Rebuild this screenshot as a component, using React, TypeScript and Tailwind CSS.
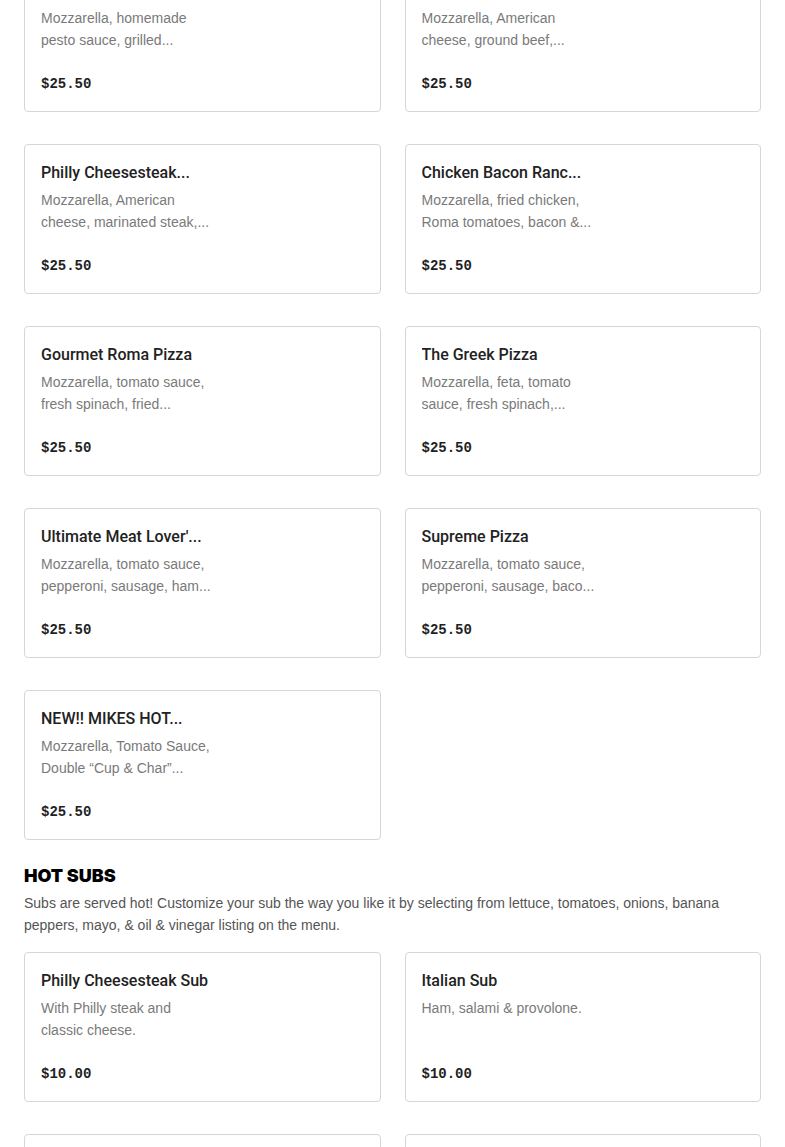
import React from "react";

type Item = { name: string; desc: string; price: string };

const pizzas: Item[] = [
  { name: "Chicken Pesto Pizza...", desc: "Mozzarella, homemade pesto sauce, grilled...", price: "$25.50" },
  { name: "Bacon Cheeseburger P...", desc: "Mozzarella, American cheese, ground beef,...", price: "$25.50" },
  { name: "Philly Cheesesteak...", desc: "Mozzarella, American cheese, marinated steak,...", price: "$25.50" },
  { name: "Chicken Bacon Ranc...", desc: "Mozzarella, fried chicken, Roma tomatoes, bacon &...", price: "$25.50" },
  { name: "Gourmet Roma Pizza", desc: "Mozzarella, tomato sauce, fresh spinach, fried...", price: "$25.50" },
  { name: "The Greek Pizza", desc: "Mozzarella, feta, tomato sauce, fresh spinach,...", price: "$25.50" },
  { name: "Ultimate Meat Lover'...", desc: "Mozzarella, tomato sauce, pepperoni, sausage, ham...", price: "$25.50" },
  { name: "Supreme Pizza", desc: "Mozzarella, tomato sauce, pepperoni, sausage, baco...", price: "$25.50" },
  { name: "NEW!! MIKES HOT...", desc: "Mozzarella, Tomato Sauce, Double \u201CCup & Char\u201D...", price: "$25.50" },
];

const subs: Item[] = [
  { name: "Philly Cheesesteak Sub", desc: "With Philly steak and classic cheese.", price: "$10.00" },
  { name: "Italian Sub", desc: "Ham, salami & provolone.", price: "$10.00" },
  { name: "Chicken Cheesesteak...", desc: "With grilled chicken and classic cheese.", price: "$10.00" },
  { name: "Meatball Sub", desc: "Meatballs, marinara & mozzarella.", price: "$10.00" },
];

const Card = ({ item }: { item: Item }) => (
  <div className="flex h-[150px] flex-col rounded border border-[#d6d6d6] bg-white px-4 pt-4 pb-[17px]">
    <div className="w-[180px] truncate font-['Roboto',sans-serif] text-base leading-6 font-medium text-[#222222]">
      {item.name}
    </div>
    <p className="mt-1 line-clamp-2 w-[174px] text-sm leading-[22px] text-[#7a7a7a]">
      {item.desc}
    </p>
    <div className="mt-auto font-['Liberation_Mono',monospace] text-sm leading-5 font-bold text-[#1f1f1f]">
      {item.price}
    </div>
  </div>
);

export default function App() {
  return (
    <div className="min-h-screen overflow-hidden bg-white font-['Liberation_Sans',Arial,sans-serif]">
      <div className="-mt-[38px] px-6">
        <div className="grid grid-cols-2 gap-x-6 gap-y-8">
          {pizzas.map((p) => (
            <Card key={p.name} item={p} />
          ))}
        </div>

        <h2 className="mt-[22px] font-['Inter',sans-serif] text-lg leading-7 font-black text-black">
          HOT SUBS
        </h2>
        <p className="mt-[2px] text-sm leading-[22px] text-[#555555]">
          Subs are served hot! Customize your sub the way you like it by selecting from lettuce,
          tomatoes, onions, banana peppers, mayo, &amp; oil &amp; vinegar listing on the menu.
        </p>

        <div className="mt-4 grid grid-cols-2 gap-x-6 gap-y-8 pb-10">
          {subs.map((s) => (
            <Card key={s.name} item={s} />
          ))}
        </div>
      </div>
    </div>
  );
}
